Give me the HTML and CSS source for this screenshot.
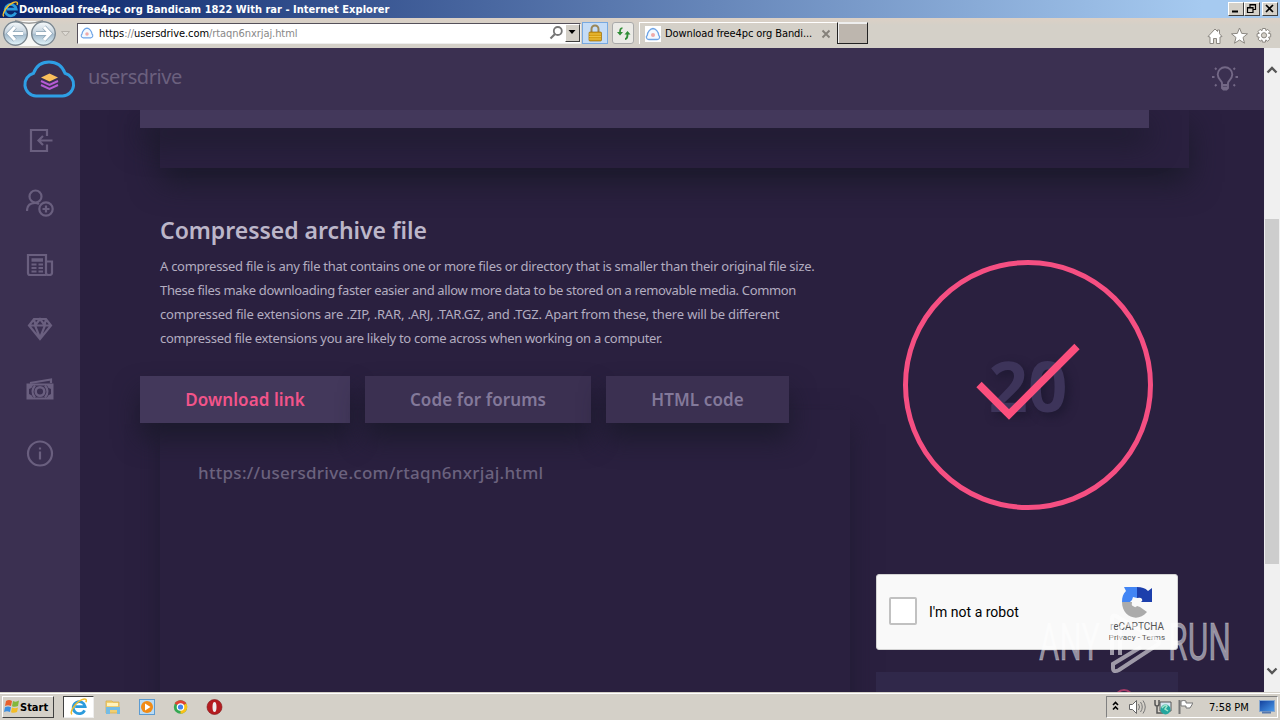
FILE: index.html
```html
<!DOCTYPE html>
<html lang="en">
<head>
<meta charset="utf-8">
<title>Download free4pc org Bandicam 1822 With rar</title>
<link rel="stylesheet" href="styles.css">
</head>
<body>
<svg class="defs" width="0" height="0">
  <defs>
    <linearGradient id="nav" x1="0" y1="0" x2="0" y2="1"><stop offset="0" stop-color="#f7fafc"/><stop offset=".48" stop-color="#c4d3de"/><stop offset=".55" stop-color="#a5bccd"/><stop offset="1" stop-color="#e4f6fc"/></linearGradient>
    <linearGradient id="screen" x1="0" y1="0" x2="1" y2="1"><stop offset="0" stop-color="#123f9b"/><stop offset="1" stop-color="#4b9cec"/></linearGradient>
    <symbol id="ie" viewBox="0 0 18 18">
      <path d="M14.6 12.3a6 6 0 1 1 .5-3.7H5.2" fill="none" stroke="#2b9bdc" stroke-width="2.8"/>
      <path d="M2 16.3C-.8 14 5.500 4.300 12 1.600c4-1.700 5 .2 3.900 2.600" fill="none" stroke="#f2bd2c" stroke-width="1.500"/>
    </symbol>
    <symbol id="page" viewBox="0 0 16 16">
      <rect width="16" height="16" fill="#fff"/>
      <path d="M3.800 13.500a2.400 2.400 0 0 1-1.500-4.300c.2-3.600 3-6.500 5.700-6.700 2.700.2 5.500 3.100 5.700 6.700a2.400 2.400 0 0 1-1.500 4.300z" fill="#f3f9ff" stroke="#6ea4e6" stroke-width="1.300"/>
      <circle cx="8" cy="9" r="2" fill="#efaaa9"/>
    </symbol>
  </defs>
</svg>
<div class="desktop">
  <header class="titlebar">
    <svg width="17" height="17"><use href="#ie"/></svg>
    <span class="title">Download free4pc org Bandicam 1822 With rar - Internet Explorer</span>
    <span class="winbtns">
      <span class="wb"><svg width="13" height="11"><path d="M3 8.500h6" stroke="#000" stroke-width="2"/></svg></span>
      <span class="wb"><svg width="13" height="11"><path d="M5 4V1.500h5.500v5H8M5 2h6M2.500 4.500H8v5H2.500zM2 5h6" fill="none" stroke="#000" stroke-width="1.200"/></svg></span>
      <span class="wb last"><svg width="13" height="11"><path d="M3 2l7 7M10 2L3 9" stroke="#000" stroke-width="1.700"/></svg></span>
    </span>
  </header>
  <div class="toolbar">
    <svg class="navs" width="74" height="30" viewBox="0 0 74 30">
      <rect x="3" y="3" width="53" height="25" rx="12.500" fill="#f7f7f5"/>
      <path d="M15 2.500Q29 8 43 2.500" fill="none" stroke="#999" stroke-width="1.500"/>
      <circle cx="15.500" cy="15.500" r="11.800" fill="url(#nav)" stroke="#7b8790" stroke-width="1.400"/>
      <circle cx="43.500" cy="15.500" r="11.800" fill="url(#nav)" stroke="#7b8790" stroke-width="1.400"/>
      <path d="M15 9l-6 6.500 6 6.500M9.500 15.500H23" fill="none" stroke="#8da5b7" stroke-width="4.500"/>
      <path d="M44 9l6 6.500-6 6.500M49.500 15.500H36" fill="none" stroke="#8da5b7" stroke-width="4.500"/>
      <path d="M15 9l-6 6.500 6 6.500M9.500 15.500H23M44 9l6 6.500-6 6.500M49.500 15.500H36" fill="none" stroke="#fff" stroke-width="3.200"/>
      <path d="M61.500 13.500h8l-4 4.500z" fill="#dedbd5" stroke="#b4b0a9"/>
    </svg>
    <div class="address">
      <svg width="14" height="14"><use href="#page"/></svg>
      <span class="url"><b>https</b>://<b>usersdrive.com</b>/rtaqn6nxrjaj.html</span>
      <svg class="mag" width="15" height="16" viewBox="0 0 15 16"><circle cx="8.800" cy="6" r="4" fill="none" stroke="#777" stroke-width="1.800"/><path d="M6 9l-4.500 4.500" stroke="#777" stroke-width="2.200"/></svg>
      <span class="drop"><svg width="12" height="14"><path d="M2.500 5h7L6 9z"/></svg></span>
    </div>
    <span class="lock"><svg width="16" height="18" viewBox="0 0 16 18"><path d="M4.500 8V5a3.500 3.500 0 0 1 7 0v3" fill="none" stroke="#9a8656" stroke-width="2"/><rect x="2" y="8" width="12.500" height="9" rx="1" fill="#d79f13" stroke="#9b6d0b" stroke-width=".7"/><path d="M2 10h12M2 12.500h12M2 15h12" stroke="#f3cb52" stroke-width=".8"/></svg></span>
    <span class="refresh"><svg width="17" height="17" viewBox="0 0 17 17"><path d="M7.500 3C5.500 3 5 4.500 5 7.500" fill="none" stroke="#2f8d36" stroke-width="1.700"/><path d="M2 7h6l-3 3.500zM9.500 9.500h6l-3-3.500z" fill="#2f8d36"/><path d="M10 14c2 0 2.500-1.500 2.500-5" fill="none" stroke="#2f8d36" stroke-width="1.900"/></svg></span>
    <div class="tab"><svg width="16" height="16"><use href="#page"/></svg><span class="tabname">Download free4pc org Bandi...</span><svg width="10" height="10"><path d="M1.500 1.500l7 7m0-7l-7 7" stroke="#85817a" stroke-width="1.900"/></svg></div>
    <span class="newtab"></span>
    <svg class="tools" width="68" height="18" viewBox="0 0 68 18">
      <g fill="#fff" stroke="#8b8781">
        <path d="M2 9.500L9 2l2.500 2.500V3h2v3.700L16 9.500l-2 .5v6.500h-3.500v-5h-3v5H4V10z"/>
        <path d="M33.500 1l2.200 5.400 5.800.4-4.500 3.700 1.500 5.700-5-3.200-5 3.200 1.500-5.700-4.500-3.700 5.800-.4z"/>
        <path d="M56.500 1.500h3l.4 2.200 1.800-1.300 2.100 2.100-1.300 1.900 2.200.4v3l-2.200.4 1.300 1.900-2.100 2.100-1.900-1.300-.4 2.200h-3l-.4-2.200-1.900 1.300-2.100-2.100 1.300-1.900-2.200-.4v-3l2.200-.4-1.300-1.900 2.100-2.100 1.900 1.300z"/><circle cx="58" cy="8.300" r="2.600" fill="#d4d0c8"/>
      </g>
    </svg>
  </div>

  <div class="viewport">
    <div class="site">
      <header class="sitehead">
        <svg width="54" height="40" viewBox="0 0 54 40"><path d="M14 36.500a11.600 11.600 0 0 1-2.500-22.800C14 7 19 2.500 27 2.500S40.500 7 43 13.700A11.600 11.600 0 0 1 40.500 36.500z" transform="translate(0 .5)" fill="none" stroke="#2e9fe5" stroke-width="3"/><path d="M27.500 14.500l8.500 4-8.500 4-8.500-4z" fill="#f9bf5c"/><path d="M19 22l8.500 3.800 8.500-3.800M19 26l8.500 3.800 8.500-3.800" fill="none" stroke="#b65bd4" stroke-width="2"/></svg>
        <span class="brand">usersdrive</span>
        <svg class="bulb" width="26" height="26" viewBox="0 0 26 26" fill="none" stroke="#736886" stroke-width="1.900"><path d="M10 19v-2c0-2-4.300-4.200-4.300-8.500a7.300 7.300 0 0 1 14.600 0c0 4.300-4.300 6.500-4.300 8.500v2zM10 19v3l1.500 1.500h3L16 22v-3M10 21.500h6M0 11h2.500M23.500 11H26M3 2l1.500 1.500M23 2l-1.500 1.500M3 20l1.500-1.500M23 20l-1.500-1.500"/></svg>
      </header>
      <div class="body">
        <nav class="side">
          <svg width="28" height="28" viewBox="0 0 28 28"><path d="M21 10V4H5v21h16v-6.500M26.500 14.500H12M17 10l-4.500 4.500L17 19"/></svg>
          <svg width="28" height="28" viewBox="0 0 28 28"><circle cx="9.500" cy="7.500" r="6"/><path d="M1 22c0-5.500 3-8 8-8 2 0 3 .3 4 1"/><circle cx="20" cy="20" r="6.700"/><path d="M20 16.500v7M16.500 20h7"/></svg>
          <svg width="28" height="28" viewBox="0 0 28 28"><path d="M20.500 24H4q-2 0-2-2V4h18v18q0 2 3 2t3-2V10.500h-5.500"/><path d="M5.500 9H17" stroke-width="3.500"/><path d="M5.500 13.500h5M12.500 13.500H17M5.500 17h5M12.500 17H17M5.500 20.500h5M12.500 20.500H17"/></svg>
          <svg width="28" height="28" viewBox="0 0 28 28"><path d="M8 5h12l5 6.500L14 25 3 11.500zM3 11.500h22M14 5l-5 6.500L14 24l5-12.500zM8 5l1.500 6.500M20 5l-1.500 6.500"/></svg>
          <svg width="28" height="28" viewBox="0 0 28 28"><path class="solid" fill-rule="evenodd" d="M.5 7.500h27v16H.500zM7 9.500q-1 3-4 3.500v5q3 .5 4 3.500h14q1-3 4-3.500v-5q-3-.5-4-3.500z"/><path d="M4 7l21-3.500V7M9 9.500q-5 6 0 12M19 9.500q5 6 0 12"/><circle cx="14" cy="15.500" r="4.300" stroke-width="2.500"/></svg>
          <svg width="28" height="28" viewBox="0 0 28 28"><circle cx="14" cy="14.500" r="12"/><path d="M14 12.500v8M14 8.500v2"/></svg>
        </nav>
        <main class="main">
          <div class="toppanel"><div class="strip"></div></div>
          <div class="cols">
            <section class="left">
              <h1><span>Compressed archive file</span></h1>
              <p><span class="l1">A compressed file is any file that contains one or more files or directory that is smaller than their original file size.</span>
              <span class="l2">These files make downloading faster easier and allow more data to be stored on a removable media. Common</span>
              <span class="l3">compressed file extensions are .ZIP, .RAR, .ARJ, .TAR.GZ, and .TGZ. Apart from these, there will be different</span>
              <span class="l4">compressed file extensions you are likely to come across when working on a computer.</span></p>
              <div class="tabs">
                <div class="t on">Download link</div><div class="t t2">Code for forums</div><div class="t t3">HTML code</div>
              </div>
              <div class="linkpanel"><span>https://usersdrive.com/rtaqn6nxrjaj.html</span></div>
            </section>
            <aside class="right">
              <div class="ring"><span class="count">20</span><svg class="check" width="250" height="250"><path d="M76 124.500L106 154.500 174 86.500" fill="none" stroke="#fb4f7d" stroke-width="7.500"/></svg></div>
              <div class="captcha">
                <span class="box"></span><span class="robot">I'm not a robot</span>
                <div class="rc">
                  <svg width="34" height="32" viewBox="0 0 34 32"><path d="M17 1c5 0 8 1 11 4l4-3v14H21q2-1 1-3t-5-1z" fill="#1c3fac"/><path d="M2 16C2 11 3 8 6 5L4 1h13v11l-4-1-1 3-2 2z" fill="#4285f4"/><path d="M2 16h10c0 2-1 3 1 4s2 2 4 0l3 1 7 5c-9 11-25 5-25-10z" fill="#ababab"/></svg>
                  <span class="rn">reCAPTCHA</span><span class="rt">Privacy - Terms</span>
                </div>
              </div>
              <div class="nextbox"><svg width="22" height="19"><circle cx="11" cy="11" r="9" fill="none" stroke="#a83d68" stroke-width="2"/></svg></div>
            </aside>
          </div>
        </main>
      </div>
    </div>
    <div class="scroll">
      <svg width="16" height="16" viewBox="0 0 16 16"><path d="M3.500 10.500L8 6l4.500 4.500" fill="none" stroke="#555" stroke-width="2.300"/></svg>
      <span class="thumb"></span>
      <svg class="dn" width="16" height="16" viewBox="0 0 16 16"><path d="M3.500 5.500L8 10l4.500-4.500" fill="none" stroke="#555" stroke-width="2.300"/></svg>
    </div>
    <svg class="watermark" width="210" height="72" viewBox="0 0 210 72">
      <g fill="#fff" fill-opacity=".5" stroke="#fff" stroke-opacity=".3" stroke-width=".8" font-family="Roboto, sans-serif" font-size="52">
        <text x="4" y="53" textLength="61" lengthAdjust="spacingAndGlyphs">ANY</text>
        <text x="133" y="53" textLength="63" lengthAdjust="spacingAndGlyphs">RUN</text>
      </g>
      <path d="M77 47V11q0-5 4-3l41 24q4 3 0 5L84 62q-6 3-6-2v-4l28-17M85 18v29" transform="translate(0 1)" fill="none" stroke="#fff" stroke-opacity=".55" stroke-width="4"/>
    </svg>
  </div>

  <footer class="taskbar">
    <div class="start"><svg width="17" height="16" viewBox="0 0 17 16"><path d="M3 2q3-2 6 0L8 7Q5 5.500 2 7z" fill="#e8602c"/><path d="M10 2q3 1.500 6-.5L15 7q-3 1.500-6 .2z" fill="#83b73b"/><path d="M2 8.300q3-1.500 6 0L7 13q-3-1.500-6 0z" fill="#3d8fe0"/><path d="M9 8.500q3 1.300 6 0L14 13q-3 1.500-6 .3z" fill="#f4bd26"/></svg><span>Start</span></div>
    <div class="task"><svg width="18" height="18"><use href="#ie"/></svg></div>
    <svg class="quick" width="120" height="20" viewBox="0 0 120 20">
      <path d="M3 4h6l1 1h6v11H3z" fill="#f1cf70" stroke="#d2aa45" stroke-width=".7"/><path d="M4 6h11v3H4z" fill="#fff3bd"/><path d="M3 10h14v7h-3v-4H7v4H3z" fill="#74bce5"/>
      <rect x="36.500" y="2.500" width="15" height="15" fill="#b9dbf5" stroke="#5c9bd1"/><circle cx="44" cy="10" r="6" fill="#f18b16"/><path d="M42 6.500v7l5.500-3.500z" fill="#fff"/>
      <circle cx="77.500" cy="10" r="6.700" fill="#35a852"/><path d="M77.500 10L71.700 6.600a6.700 6.700 0 0 1 11.600 0z" fill="#e24133"/><path d="M77.500 10l5.800-3.400a6.700 6.700 0 0 1-5.800 10.100z" fill="#fbc116"/><circle cx="77.500" cy="10" r="3.200" fill="#4385ed" stroke="#fff" stroke-width="1.200"/>
      <circle cx="111.500" cy="10" r="7.500" fill="#b51c20" stroke="#7f1216" stroke-width=".6"/><ellipse cx="111.500" cy="10" rx="2" ry="5" fill="#eee"/>
    </svg>
    <div class="tray">
      <svg width="84" height="20" viewBox="0 0 84 20">
        <path d="M4 8l2.500-2.500L9 8M4 12.500L6.500 10 9 12.500" fill="none" stroke="#000" stroke-width="1.600"/>
        <path d="M20.500 7.500h3l4-4v13l-4-4h-3z" fill="#fff" stroke="#666"/><path d="M29.500 7q2 3 0 6M31.500 5q3.500 5 0 10M34 3.500q4.500 6.500 0 13" fill="none" stroke="#777"/>
        <path d="M51 5h11v9H51z" fill="#d7e7f2" stroke="#555"/><path d="M46 3v4q0 2 2 2t2-2V3M48 9v7h6" fill="none" stroke="#555" stroke-width="1.500"/><circle cx="56.500" cy="12.500" r="5" fill="#24a59d"/><path d="M53 11q3-4 5-2l-2 3 3 2" stroke="#9fe5c9" fill="none" stroke-width="1.500"/>
        <path d="M70.500 3v14" stroke="#777" stroke-width="2"/><path d="M72 4q3-1 5 0v2h7l-3 5h-4V9h-5z" fill="#fff" stroke="#777"/>
      </svg>
      <span class="clock">7:58 PM</span>
      <svg class="desk" width="16" height="14"><rect x=".5" y=".5" width="15" height="11" fill="url(#screen)" stroke="#87a8d0"/><path d="M3 12.500h9" stroke="#5778ac" stroke-width="2"/></svg>
    </div>
  </footer>
</div>
</body>
</html>
```
FILE: styles.css
```css
* { box-sizing: border-box; }
body { margin: 0; }
svg { display: block; flex: none; }
.defs { position: absolute; }
.desktop { width: 1280px; height: 720px; display: flex; flex-direction: column; overflow: hidden; font-family: "DejaVu Sans Condensed", "DejaVu Sans", sans-serif; font-size: 11px; white-space: nowrap; }
.titlebar { height: 18px; flex: none; display: flex; align-items: center; padding-left: 2px; background: linear-gradient(90deg, #0a246a, #a6caf0 94%); color: #fff; font-weight: bold; }
.title { letter-spacing: .03px; }
.winbtns { margin-left: auto; display: flex; padding-right: 2px; }
.wb { width: 16px; height: 14px; background: #d4d0c8; border: 1px solid; border-color: #fff #404040 #404040 #fff; overflow: hidden; }
.wb.last { margin-left: 2px; }
.toolbar { height: 30px; flex: none; background: linear-gradient(#dcd0c5, #d4d0c8 7px); display: flex; align-items: center; }
.address { margin-left: 3px; width: 504px; height: 21px; display: flex; align-items: center; background: #fff; border: 1px solid; border-color: #55505a #eee #eee #55505a; padding-left: 2px; }
.url { margin-left: 5px; color: #888; letter-spacing: -.07px; }
.url b { color: #000; font-weight: normal; }
.mag { margin-left: auto; margin-right: 1px; }
.drop { width: 15px; height: 18px; background: #d4d0c8; border: 1px solid; border-color: #fff #404040 #404040 #fff; }
.lock { margin-left: 1px; width: 26px; height: 22px; border: 1px solid #78a9e0; background: #c5dcf6; display: flex; justify-content: center; align-items: center; }
.refresh { margin-left: 4px; width: 22px; height: 22px; border: 1px solid #aaa; border-radius: 3px; background: #ebeae6; display: flex; justify-content: center; align-items: center; }
.tab { width: 198px; height: 22px; margin-left: 5px; border-left: 1px solid #fff; border-top: 1px solid #fff; display: flex; align-items: center; padding-left: 5px; }
.tabname { margin-left: 4px; width: 156px; letter-spacing: -.1px; }
.newtab { width: 31px; height: 22px; background: #bdb6ae; border: 1px solid; border-color: #eee #222 #222 #222; box-shadow: inset 1px 1px #eee; }
.tools { margin-left: auto; margin-right: 6px; margin-top: 5px; }

.viewport { position: relative; flex: 1; display: flex; min-height: 0; background: #2a203f; }
.site { flex: 1; display: flex; flex-direction: column; font-family: "Noto Sans", "Open Sans", sans-serif; min-width: 0; }
.sitehead { height: 62px; flex: none; background: #3b3051; display: flex; align-items: center; padding: 0 26px 0 22px; }
.brand { margin-left: 12px; margin-top: -5px; font-size: 20px; letter-spacing: -.45px; color: #6b607e; }
.bulb { margin-left: auto; margin-top: -1px; }
.body { flex: 1; display: flex; min-height: 0; }
.side { width: 80px; background: #3b3051; display: flex; flex-direction: column; align-items: center; gap: 34.600px; padding-top: 16px; }
.side svg { fill: none; stroke: #6a5f7f; stroke-width: 2.200; }
.side .solid { fill: #6a5f7f; stroke: none; }
.main { flex: 1; overflow: hidden; padding-left: 80px; }
.toppanel { width: 1029px; height: 58px; box-shadow: 0 14px 30px #1b1a2b; background: #2a203f; }
.strip { width: 1009px; height: 18px; margin-left: -20px; background: #43385b; box-shadow: 0 14px 30px #1b1a2b; }
.cols { display: flex; }
.left { width: 690px; padding-top: 44px; }
h1 { margin: 0; font-size: 23px; line-height: 36px; font-weight: 600; color: #bcb6c9; letter-spacing: -.03px; }
p { margin: 6px 0 0; font-size: 13px; line-height: 24px; color: #b3adc0; }
p span { display: block; width: max-content; }
.l1 { letter-spacing: -.278px; }
.l2 { letter-spacing: -.346px; }
.l3 { letter-spacing: -.18px; }
.l4 { letter-spacing: -.315px; }
.tabs { position: relative; display: flex; gap: 15px; margin: 26px 0 0 -20px; }
.t { height: 47px; width: 210px; line-height: 47px; text-align: center; background: #3b3051; color: #83799a; font-size: 17px; letter-spacing: .1px; font-weight: 600; box-shadow: 0 16px 26px #1c1a2d; }
.t2 { width: 226px; }
.t3 { width: 183px; }
.t.on { background: #43385b; color: #f2548a; }
.linkpanel { height: 310px; margin-top: -13px; padding: 51px 0 0 38px; font-size: 17px; font-weight: 500; letter-spacing: .28px; line-height: 24px; color: #6b627e; box-shadow: 0 14px 24px #201b32; }
.right { width: 302px; margin-left: 26px; padding-top: 92px; }
.ring { position: relative; width: 250px; height: 250px; margin-left: 27px; border: 5px solid #f54f82; border-radius: 50%; display: flex; justify-content: center; align-items: center; }
.count { font-family: "Open Sans", "Noto Sans", sans-serif; font-style: normal; font-size: 69px; line-height: 80px; font-weight: 700; color: #3d345a; text-shadow: 4px 4px 10px #1e1932; }
.check { position: absolute; left: -5px; top: -5px; }
.captcha { margin-top: 64px; height: 76px; border-radius: 3px; background: #f9f9f9; border: 1px solid #d3d3d3; display: flex; align-items: center; padding-left: 12px; font-family: Roboto, sans-serif; color: #000; }
.box { width: 28px; height: 28px; background: #fff; border: 2px solid #c1c1c1; border-radius: 2px; margin-top: -2px; }
.robot { margin-left: 12px; font-size: 14px; }
.rc { margin-left: auto; width: 80px; display: flex; flex-direction: column; align-items: center; color: #555; padding-top: 5px; }
.rn { font-size: 10px; line-height: 12px; margin-top: 3px; }
.rt { font-size: 8px; line-height: 10px; letter-spacing: .15px; }
.nextbox { margin-top: 22px; height: 40px; background: #30284a; padding: 16px 0 0 237px; }
.scroll { width: 16px; background: #f0f0f0; display: flex; flex-direction: column; padding: 14px 0 13px; }
.thumb { margin-top: 141px; height: 345px; margin-left: 1px; width: 14px; background: #cdcdcd; }
.dn { margin-top: auto; }
.watermark { position: absolute; left: 1035px; top: 559px; }

.taskbar { height: 28px; flex: none; background: #d4d0c8; border-top: 1px solid #d4d0c8; box-shadow: inset 0 1px #fff; display: flex; align-items: center; padding: 1px 2px 0; }
.start { width: 52px; height: 22px; border: 1px solid; border-color: #fff #404040 #404040 #fff; display: flex; align-items: center; font-weight: bold; }
.task { width: 31px; height: 22px; margin-left: 9px; background: #fff; border: 1px solid; border-color: #404040 #eee #eee #404040; display: flex; justify-content: center; align-items: center; }
.quick { margin-left: 9px; }
.tray { margin-left: auto; width: 172px; height: 22px; border: 1px solid; border-color: #808080 #fff #fff #808080; display: flex; align-items: center; padding-left: 2px; }
.clock { margin-left: 16px; }
.desk { margin-left: auto; margin-right: 2px; }
```
